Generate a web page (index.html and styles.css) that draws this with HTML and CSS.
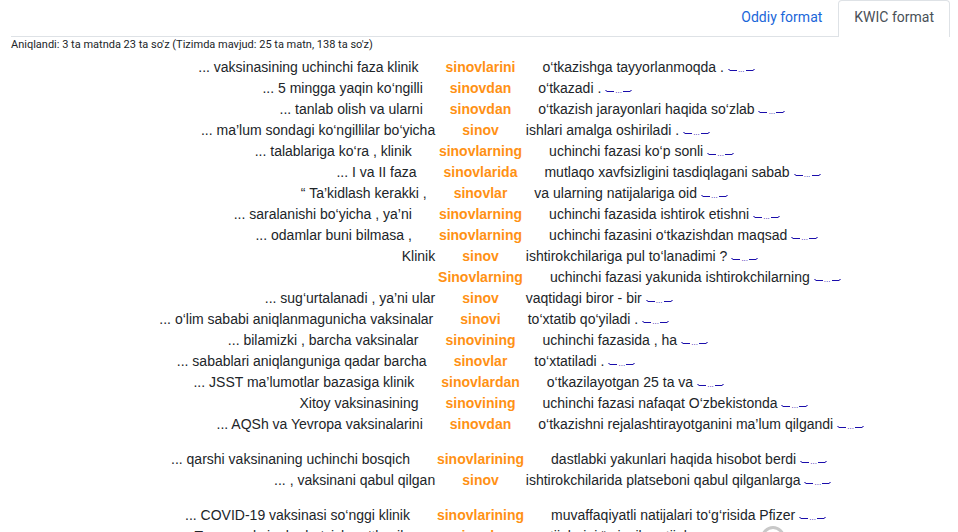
FILE: index.html
```
<!DOCTYPE html>
<html lang="uz">
<head>
<meta charset="utf-8">
<meta name="viewport" content="width=device-width, initial-scale=1">
<title>KWIC format</title>
<link rel="stylesheet" href="styles.css">
</head>
<body>
<main class="page">
<nav class="tabs">
<a class="tab" href="#oddiy">Oddiy format</a>
<a class="tab tab-active" href="#kwic" aria-current="page">KWIC format</a>
</nav>
<p class="summary">Aniqlandi: 3 ta matnda 23 ta so'z (Tizimda mavjud: 25 ta matn, 138 ta so'z)</p>
<div class="results" id="results"></div>
</main>
<div class="ring"></div>
<script src="app.js"></script>
</body>
</html>
```
FILE: styles.css
```
* { box-sizing: border-box; }

body {
  margin: 0;
  height: 100vh;
  overflow: hidden;
  background: #fff;
  color: #212529;
  font-family: "Liberation Sans", Arial, sans-serif;
  font-size: 14px;
  line-height: 21px;
}

.page { padding: 0 8px 0 11px; }

.tabs {
  display: flex;
  justify-content: flex-end;
  height: 37px;
  border-bottom: 1px solid #dee2e6;
  font-family: Roboto, sans-serif;
}

.tab {
  height: 37px;
  padding: 6px 15px 0;
  border: 1px solid transparent;
  border-bottom: 0;
  border-radius: 4px 4px 0 0;
  color: #1a66d9;
  text-decoration: none;
}

.tab-active {
  background: #fff;
  border-color: #dee2e6;
  color: #495057;
}

.summary {
  margin: 0;
  font-family: Roboto, sans-serif;
  font-size: 11px;
  line-height: 15px;
}

.results {
  display: flex;
  flex-direction: column;
  gap: 14px;
  padding-top: 5px;
}

.group {
  margin: 0;
  padding: 0;
  list-style: none;
}

.line {
  display: grid;
  grid-template-columns: 1fr auto 1fr;
  column-gap: 27px;
  min-height: 21px;
  white-space: nowrap;
}

.before { text-align: right; }

.keyword { color: #ff9114; }

.more {
  display: inline-flex;
  align-items: baseline;
  color: #1a0dab;
  font-size: 8px;
  line-height: 8px;
  text-decoration: none;
}

.harpoon {
  width: 9px;
  height: 4px;
  fill: none;
  stroke: currentColor;
}

.harpoon-right { transform: scaleX(-1); }

.dots {
  width: 9px;
  text-align: center;
}

.ring {
  position: fixed;
  left: 761px;
  top: 526px;
  width: 24px;
  height: 24px;
  border: 3px solid #c8c8c8;
  border-radius: 50%;
}
```
FILE: app.js
```
const groups = [
  [
    ["... vaksinasining uchinchi faza klinik", "sinovlarini", "o‘tkazishga tayyorlanmoqda ."],
    ["... 5 mingga yaqin ko‘ngilli", "sinovdan", "o‘tkazadi ."],
    ["... tanlab olish va ularni", "sinovdan", "o‘tkazish jarayonlari haqida so‘zlab"],
    ["... ma’lum sondagi ko‘ngillilar bo‘yicha", "sinov", "ishlari amalga oshiriladi ."],
    ["... talablariga ko‘ra , klinik", "sinovlarning", "uchinchi fazasi ko‘p sonli"],
    ["... I va II faza", "sinovlarida", "mutlaqo xavfsizligini tasdiqlagani sabab"],
    ["“ Ta’kidlash kerakki ,", "sinovlar", "va ularning natijalariga oid"],
    ["... saralanishi bo‘yicha , ya’ni", "sinovlarning", "uchinchi fazasida ishtirok etishni"],
    ["... odamlar buni bilmasa ,", "sinovlarning", "uchinchi fazasini o‘tkazishdan maqsad"],
    ["Klinik", "sinov", "ishtirokchilariga pul to‘lanadimi ?"],
    ["", "Sinovlarning", "uchinchi fazasi yakunida ishtirokchilarning"],
    ["... sug‘urtalanadi , ya’ni ular", "sinov", "vaqtidagi biror - bir"],
    ["... o‘lim sababi aniqlanmagunicha vaksinalar", "sinovi", "to‘xtatib qo‘yiladi ."],
    ["... bilamizki , barcha vaksinalar", "sinovining", "uchinchi fazasida , ha"],
    ["... sabablari aniqlanguniga qadar barcha", "sinovlar", "to‘xtatiladi ."],
    ["... JSST ma’lumotlar bazasiga klinik", "sinovlardan", "o‘tkazilayotgan 25 ta va"],
    ["Xitoy vaksinasining", "sinovining", "uchinchi fazasi nafaqat O‘zbekistonda"],
    ["... AQSh va Yevropa vaksinalarini", "sinovdan", "o‘tkazishni rejalashtirayotganini ma’lum qilgandi"]
  ],
  [
    ["... qarshi vaksinaning uchinchi bosqich", "sinovlarining", "dastlabki yakunlari haqida hisobot berdi"],
    ["... , vaksinani qabul qilgan", "sinov", "ishtirokchilarida platseboni qabul qilganlarga"]
  ],
  [
    ["... COVID-19 vaksinasi so‘nggi klinik", "sinovlarining", "muvaffaqiyatli natijalari to‘g‘risida Pfizer"],
    ["... Tramp vaksinalar bo‘yicha o‘tkazilgan", "sinovlar", "natijalarini “ ajoyib natijalar"]
  ]
];

const harpoon = side =>
  `<svg class="harpoon harpoon-${side}" viewBox="0 0 9 4" aria-hidden="true"><path d="M0 1.5H2" opacity=".6"/><path d="M1.5 2.5H9"/></svg>`;

document.getElementById("results").innerHTML = groups.map(rows =>
  `<ul class="group">${rows.map(([before, keyword, after]) =>
    `<li class="line"><span class="before">${before}</span><b class="keyword">${keyword}</b>` +
    `<span class="after">${after} <a class="more" href="#matn">${harpoon("left")}<span class="dots">...</span>${harpoon("right")}</a></span></li>`
  ).join("")}</ul>`
).join("");
```
